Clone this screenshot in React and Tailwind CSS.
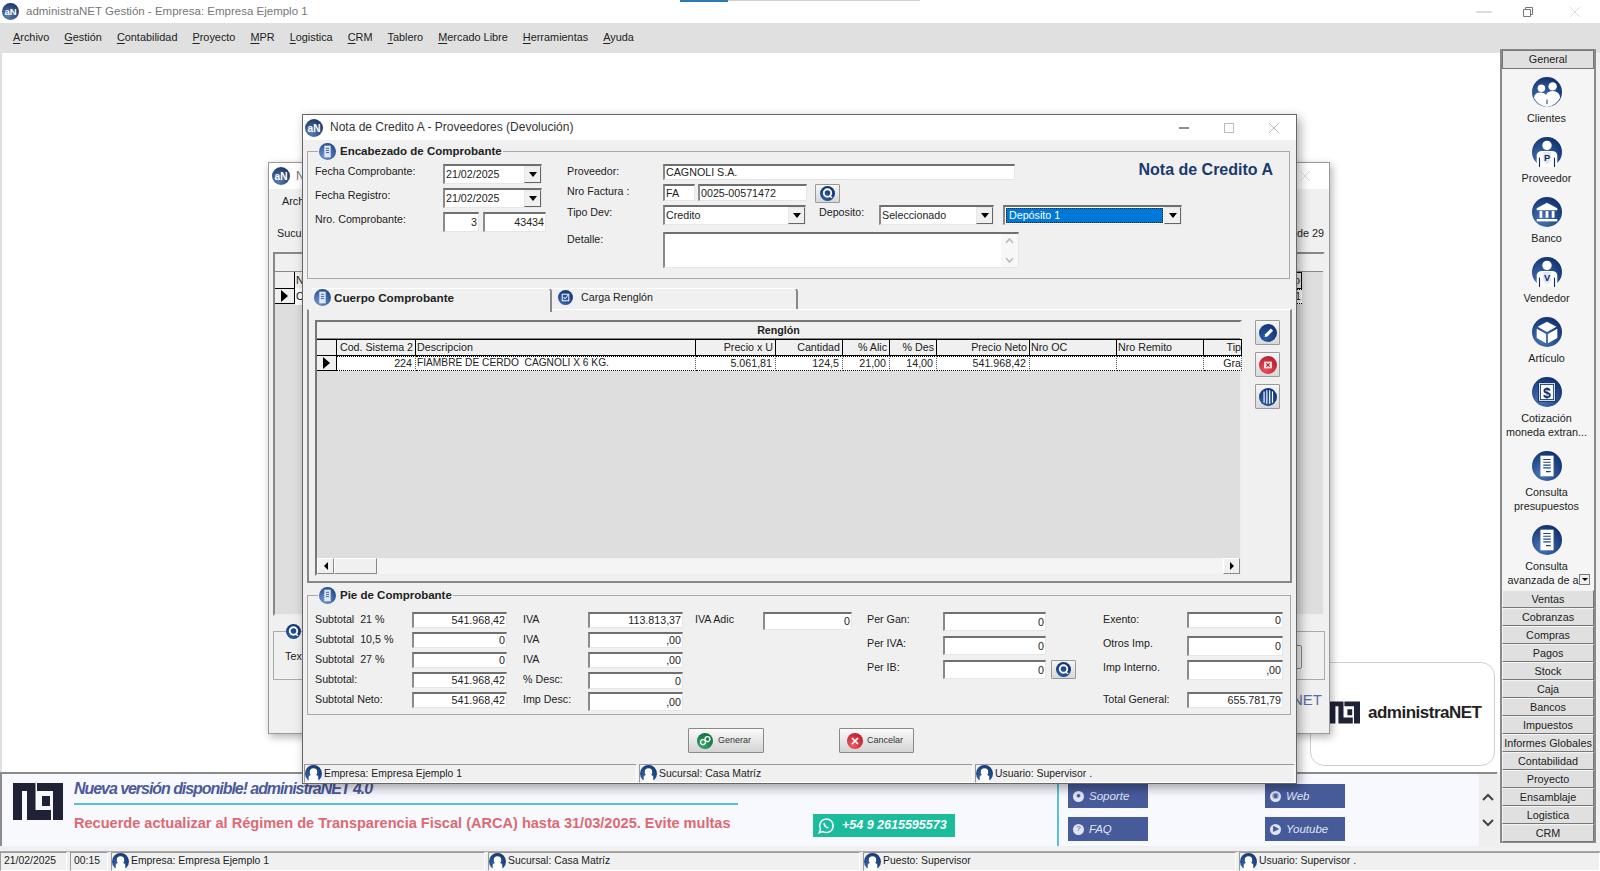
import React from 'react';

const Orb = ({ size = 30, from = '#4a78b8', to = '#0b2a68', children }) => (
    <svg width={size} height={size} viewBox="0 0 32 32" className="shrink-0">
        <defs>
            <radialGradient id={`orb${to.slice(1)}`} cx="0.35" cy="0.75" r="0.85">
                <stop offset="0" stopColor={from} />
                <stop offset="1" stopColor={to} />
            </radialGradient>
        </defs>
        <circle cx="16" cy="16" r="16" fill={`url(#orb${to.slice(1)})`} />
        {children}
    </svg>
);

const AppIcon = ({ size = 18 }) => (
    <Orb size={size} from="#5d7fb5" to="#14305f">
        <text x="16" y="23" textAnchor="middle" fontSize="18" fontWeight="700" fill="#fff">aN</text>
    </Orb>
);

const Person = ({ letter }) => (
    <>
        <circle cx="16" cy="9" r="5" fill="#fff" />
        <path d="M5 32 V20 Q5 15 11 15 H21 Q27 15 27 20 V32 Z" fill="#fff" />
        <path d="M8 32 V22 M24 32 V22" stroke="#0b2a68" strokeWidth="1.2" />
        <path d="M12 16 H20 V26 L16 29 L12 26 Z" fill="#dfe6f2" />
        <text x="16" y="26" textAnchor="middle" fontSize="10" fontWeight="700" fill="#0b2a68">{letter}</text>
    </>
);

const Clientes = () => (
    <Orb>
        <circle cx="10" cy="12" r="4" fill="#fff" />
        <circle cx="22" cy="10" r="4.5" fill="#fff" />
        <path d="M2 22 Q3 16 10 16.5 Q13 17 15 19 Q17 15 22 15 Q29 15 30 22 Q26 30 16 32 Q6 30 2 22 Z" fill="#fff" />
        <path d="M16 24 V29" stroke="#0b2a68" strokeWidth="1" />
    </Orb>
);

const Banco = () => (
    <Orb>
        <path d="M16 6 L27 12 V14 H5 V12 Z" fill="#fff" />
        <path d="M8 15 H11 V22 H8 Z M14.5 15 H17.5 V22 H14.5 Z M21 15 H24 V22 H21 Z" fill="#fff" />
        <path d="M5 23.5 H27 V26 H5 Z" fill="#fff" />
    </Orb>
);

const Cubo = () => (
    <Orb>
        <path d="M16 5 L26 10.5 L16 16 L6 10.5 Z" fill="#fff" />
        <path d="M5 12.5 L15 18 V28 L5 22.5 Z" fill="#fff" />
        <path d="M27 12.5 L17 18 V28 L27 22.5 Z" fill="#fff" />
    </Orb>
);

const Dolar = () => (
    <Orb>
        <rect x="7" y="6" width="18" height="20" fill="#e8eef8" stroke="#0b2a68" strokeWidth="1" />
        <rect x="9" y="8" width="14" height="16" fill="#fff" stroke="#1c4488" strokeWidth="1" />
        <text x="16" y="22" textAnchor="middle" fontSize="15" fontWeight="700" fill="#0b2a68">$</text>
    </Orb>
);

const Doc = () => (
    <Orb>
        <path d="M9 5 H23 V27 H9 Z" fill="#fff" />
        <path d="M12 9 H20 M12 12 H20 M12 15 H20 M12 18 H20 M15 22 H20" stroke="#1c4488" strokeWidth="1.2" />
    </Orb>
);

const Legend = () => (
    <Orb size={17} from="#6f97cc" to="#1c4488">
        <path d="M10 5 H22 V27 H10 Z" fill="#dfe8f5" />
        <path d="M13 10 H19 M13 14 H19 M13 18 H19" stroke="#1c4488" strokeWidth="1.5" />
    </Orb>
);

const Lupa = ({ size = 15 }) => (
    <Orb size={size} from="#2c5ca4" to="#0d2f70">
        <circle cx="16" cy="15" r="8" fill="none" stroke="#fff" strokeWidth="4" />
        <path d="M20 21 L26 25" stroke="#fff" strokeWidth="3" />
    </Orb>
);

const Staff = () => (
    <Orb size={17} from="#3a68ac" to="#123472">
        <circle cx="16" cy="13" r="7" fill="#fff" />
        <path d="M7 32 V24 Q7 19 12 19 H20 Q25 19 25 24 V32 Z" fill="#fff" />
    </Orb>
);

const Mark = ({ className }) => (
    <svg viewBox="0 0 50 37" className={className}>
        <path fill="#1f2235" d="M0 0 H22.5 V27 H38 V37 H14 V8 H9 V37 H0 Z M24 0 H50 V37 H40 V8 H24 Z M29 13 H37 V23 H29 Z" />
    </svg>
);

const sunken = 'border border-t-2 border-l-2 border-t-[#6f6f6f] border-l-[#8a8a8a] border-r-[#e6e6e6] border-b-[#e6e6e6] bg-white';

const Field = ({ className = '', right, children }) => (
    <div className={`${sunken} flex items-center overflow-hidden px-[1px] leading-none whitespace-nowrap ${right ? 'justify-end' : ''} ${className}`}>
        {children}
    </div>
);

const Combo = ({ className = '', value, selected }) => (
    <div className={`${sunken} flex items-stretch ${className}`}>
        <div className={`flex-1 flex items-center m-[1px] ${selected ? 'bg-[#0078d7] text-white border border-dotted border-[#222] px-[2px]' : ''}`}>{value}</div>
        <div className="w-[17px] bg-[#f0f0f0] border border-[#e8e8e8] border-r-[#666] border-b-[#666] flex items-center justify-center">
            <span className="w-0 h-0 border-x-[4px] border-x-transparent border-t-[5px] border-t-black" />
        </div>
    </div>
);

const Label = ({ className = '', children }) => <div className={`leading-[14px] whitespace-pre ${className}`}>{children}</div>;

const Group = ({ title, className = '', children }) => (
    <div className={`relative border border-[#a8a8a8] ${className}`}>
        <div className="absolute left-[10px] -top-[9px] flex items-center gap-[4px] bg-[#f0f0f0] pl-[1px] pr-[1px] h-[17px] font-bold text-[11.5px] text-[#222]">
            <Legend />
            <span>{title}</span>
        </div>
        {children}
    </div>
);

const gridCols = 'grid grid-cols-[20px_79px_280px_80px_67px_47px_47px_93px_87px_87px_38px] w-[925px] overflow-hidden';

const headers = [
    ['Cod. Sistema 2', 'text-right pr-[2px]'], ['Descripcion', 'pl-[1px]'], ['Precio x U', 'text-right pr-[2px]'], ['Cantidad', 'text-right pr-[2px]'],
    ['% Alic', 'text-right pr-[2px]'], ['% Des', 'text-right pr-[2px]'], ['Precio Neto', 'text-right pr-[2px]'], ['Nro OC', 'pl-[1px]'], ['Nro Remito', 'pl-[1px]'], ['Tip', 'text-right'],
];
const cells = [
    ['224', 'text-right pr-[3px]'], ['FIAMBRE DE CERDO  CAGNOLI X 6 KG.', 'whitespace-pre pl-[1px] text-[10.2px]'], ['5.061,81', 'text-right pr-[3px]'], ['124,5', 'text-right pr-[3px]'],
    ['21,00', 'text-right pr-[3px]'], ['14,00', 'text-right pr-[3px]'], ['541.968,42', 'text-right pr-[3px]'], ['', ''], ['', ''], ['Gra', 'text-right'],
];

const SideBtn = ({ children }) => (
    <button className="w-[25px] h-[25px] flex items-center justify-center border border-[#9a9a9a] rounded-[1px] bg-gradient-to-b from-[#f6f6f6] to-[#d8d8d8]">
        {children}
    </button>
);

const ActionBtn = ({ className = '', icon, children }) => (
    <button className={`h-[25px] flex items-center border border-[#8a8a8a] rounded-[1px] bg-gradient-to-b from-[#fafafa] to-[#d4d4d4] text-[9px] text-[#333] ${className}`}>
        {icon}{children}
    </button>
);

const menu = ['Archivo', 'Gestión', 'Contabilidad', 'Proyecto', 'MPR', 'Logistica', 'CRM', 'Tablero', 'Mercado Libre', 'Herramientas', 'Ayuda'];

const shortcuts = [
    { label: ['Clientes'], icon: <Clientes /> },
    { label: ['Proveedor'], icon: <Orb><Person letter="P" /></Orb> },
    { label: ['Banco'], icon: <Banco /> },
    { label: ['Vendedor'], icon: <Orb><Person letter="V" /></Orb> },
    { label: ['Artículo'], icon: <Cubo /> },
    { label: ['Cotización', 'moneda extran...'], icon: <Dolar /> },
    { label: ['Consulta', 'presupuestos'], icon: <Doc /> },
    { label: ['Consulta', 'avanzada de a'], icon: <Doc /> },
];

const sections = ['Ventas', 'Cobranzas', 'Compras', 'Pagos', 'Stock', 'Caja', 'Bancos', 'Impuestos', 'Informes Globales', 'Contabilidad', 'Proyecto', 'Ensamblaje', 'Logistica', 'CRM'];

const sectionBtn = 'h-[18px] flex items-center justify-center bg-[#e0e0e0] border border-[#f4f4f4] border-r-[#777] border-b-[#777] text-[10.8px] text-[#222] whitespace-nowrap';

const Sidebar = () => (
    <aside className="w-[96px] shrink-0 -mt-[4px] mb-[8px] mr-[4px] relative z-10 flex flex-col border border-[#8a8a8a] border-l-2 border-r-2 bg-[#f5f5f5]">
        <div className="h-[19px] flex items-center justify-center bg-[#e0e0e0] border border-[#777] text-[10.8px] text-[#222]">General</div>
        <div className="flex-1 flex flex-col items-center pt-[8px] pr-[3px] overflow-hidden text-[10.8px] text-[#222]">
            {shortcuts.map((s, i) => (
                <div key={i} className={`flex flex-col items-center shrink-0 relative w-full ${s.label.length > 1 ? 'h-[74px]' : 'h-[60px]'}`}>
                    {s.icon}
                    <div className="mt-[4px] text-center leading-[14px] whitespace-nowrap">
                        {s.label.map((l) => <div key={l} className={l === 'avanzada de a' ? 'pr-[7px]' : ''}>{l}</div>)}
                    </div>
                    {i === 7 && (
                        <span className="absolute right-[1px] top-[49px] w-[11px] h-[11px] bg-[#eee] border border-[#777] flex items-center justify-center">
                            <span className="w-0 h-0 border-x-[3px] border-x-transparent border-t-[3px] border-t-black" />
                        </span>
                    )}
                </div>
            ))}
        </div>
        {sections.map((s) => <div key={s} className={sectionBtn}>{s}</div>)}
    </aside>
);

const BlueLink = ({ icon, children }) => (
    <div className="w-[80px] h-[24px] bg-[#475a9a] flex items-center gap-[5px] pl-[5px] text-[#dfe4f2] italic text-[11.5px]">
        <span className="w-[11px] h-[11px] rounded-full bg-[#dfe4f2] flex items-center justify-center text-[8px] not-italic text-[#475a9a] leading-none">{icon}</span>
        <span className="pt-[1px]">{children}</span>
    </div>
);

const BottomPanel = () => (
    <div className="h-[74px] shrink-0 flex bg-[#f8f8ff] border-t-2 border-l-2 border-[#8c8c8c] mb-[5px] mr-[3px]">
        <div className="w-[66px] flex items-start justify-center pt-[9px] pl-[6px]">
            <Mark className="w-[50px] h-[37px]" />
        </div>
        <div className="w-[664px] ml-[6px] pt-[5px] shrink-0">
            <div className="font-bold italic text-[16px] leading-[20px] tracking-[-1.05px] text-[#4a5a9a] whitespace-nowrap">Nueva versión disponible! administraNET 4.0</div>
            <div className="h-[2px] mt-[4px] bg-[#5bc0de]" />
            <div className="font-bold text-[14.55px] leading-[18px] mt-[9px] text-[#dc6a72] whitespace-nowrap">Recuerde actualizar al Régimen de Transparencia Fiscal (ARCA) hasta 31/03/2025. Evite multas</div>
        </div>
        <div className="w-[319px] shrink-0 flex items-end justify-start pl-[75px] pb-[9px]">
            <div className="w-[142px] h-[23px] bg-[#1abc9c] flex items-center gap-[7px] pl-[4px] text-white italic font-bold text-[12.5px] whitespace-nowrap">
                <svg width="18" height="18" viewBox="0 0 24 24" fill="none" stroke="#fff" strokeWidth="2">
                    <path d="M3 21 L4.6 16 A9 9 0 1 1 8 19.5 Z" />
                    <path d="M8.5 8 Q8 13 14 15.5 L16 14 L14.5 12.5 L13.5 13 Q11.5 12 11 10.5 L11.5 9.5 L10 7.5 Z" fill="#fff" stroke="none" />
                </svg>
                +54 9 2615595573
            </div>
        </div>
        <div className="w-[2px] shrink-0 bg-[#5bc0de]" />
        <div className="flex-1 pl-[9px] pt-[10px] grid grid-cols-[197px_80px] grid-rows-[24px_24px] gap-y-[9px]">
            <BlueLink icon="●">Soporte</BlueLink>
            <BlueLink icon="◉">Web</BlueLink>
            <BlueLink icon="?">FAQ</BlueLink>
            <BlueLink icon="▶">Youtube</BlueLink>
        </div>
        <div className="w-[18px] shrink-0 bg-[#eeeeee] flex flex-col items-center justify-center gap-[16px]">
            <svg width="14" height="10" viewBox="0 0 14 10" fill="none" stroke="#444" strokeWidth="2"><path d="M2 8 L7 3 L12 8" /></svg>
            <svg width="14" height="10" viewBox="0 0 14 10" fill="none" stroke="#444" strokeWidth="2"><path d="M2 2 L7 7 L12 2" /></svg>
        </div>
    </div>
);

const statusCell = 'h-full flex items-center border border-t-[#9a9a9a] border-l-[#9a9a9a] border-r-[#fff] border-b-[#fff] whitespace-nowrap text-[10.4px] text-[#222]';

const StatusBar = () => (
    <div className="h-[20px] shrink-0 flex gap-[3px] bg-[#f0f0f0] border-t border-[#aaa]">
        <div className={`${statusCell} w-[67px] pl-[3px] pb-[1px]`}>21/02/2025</div>
        <div className={`${statusCell} w-[38px] pl-[3px] pb-[1px]`}>00:15</div>
        <div className={`${statusCell} w-[374px] gap-[2px]`}><Staff /><span className="pb-[2px]">Empresa: Empresa Ejemplo 1</span></div>
        <div className={`${statusCell} w-[372px] gap-[2px]`}><Staff /><span className="pb-[2px]">Sucursal: Casa Matríz</span></div>
        <div className={`${statusCell} w-[373px] gap-[2px]`}><Staff /><span className="pb-[2px]">Puesto: Supervisor</span></div>
        <div className={`${statusCell} flex-1 gap-[2px]`}><Staff /><span className="pb-[2px]">Usuario: Supervisor .</span></div>
    </div>
);

const BackWindow = () => (
    <div className="absolute left-[268px] top-[162px] w-[1062px] h-[572px] z-20 flex flex-col bg-[#f0f0f0] border border-[#999] shadow-[2px_3px_8px_rgba(0,0,0,0.3)] text-[10.8px] text-[#222]">
        <div className="h-[26px] shrink-0 bg-white flex items-center pl-[3px] gap-[6px]">
            <AppIcon />
            <span className="text-[12px] text-[#777]">N</span>
            <svg width="12" height="12" viewBox="0 0 12 12" className="ml-auto mr-[18px]" stroke="#ddd" fill="none"><path d="M1 1 L11 11 M11 1 L1 11" /></svg>
        </div>
        <div className="pl-[13px] pt-[5px] leading-[14px]">Arch</div>
        <div className="flex justify-between pl-[8px] pr-[5px] pt-[18px] leading-[14px]"><span>Sucu</span><span>de 29</span></div>
        <div className="mx-[4px] mt-[12px] h-[364px] shrink-0 border-2 border-[#888] border-r-[#eee] border-b-[#eee] bg-[#dedede]">
            <div className="h-[18px] bg-[#f0f0f0] border-b border-[#888]" />
            <div className="flex justify-between pr-[21px]">
                <div>
                    <div className="flex h-[17px]"><span className="w-[20px] bg-[#f0f0f0] border-r border-b border-black" /><span className="pl-[1px] bg-[#f0f0f0] border-b border-black pr-[30px]">N</span></div>
                    <div className="flex h-[15px] items-center">
                        <span className="w-[20px] h-full bg-[#f0f0f0] border-r border-b border-black flex items-center justify-center"><span className="w-0 h-0 border-y-[6px] border-y-transparent border-l-[7px] border-l-black" /></span>
                        <span className="pl-[1px] bg-white pr-[30px]">C</span>
                    </div>
                </div>
                <div>
                    <div className="h-[17px] bg-[#f0f0f0] border border-black pl-[12px] pr-[1px] leading-[14px] text-right">o</div>
                    <div className="h-[15px] bg-white border-y border-dotted border-black pl-[12px] pr-[1px] leading-[12px] text-right">1</div>
                </div>
            </div>
        </div>
        <div className="relative mx-[4px] mt-[15px] h-[49px] border border-[#aaa]">
            <div className="absolute left-[12px] -top-[8px] bg-[#f0f0f0]"><Lupa /></div>
            <div className="absolute left-[11px] top-[17px] leading-[14px]">Tex</div>
            <div className="absolute right-[22px] top-[13px] w-[30px] h-[24px] border border-[#888] rounded-[2px]" />
        </div>
        <div className="mt-[9px] flex justify-end pr-[7px] text-[15px] text-[#5a6fa8]">NET</div>
    </div>
);

const SearchBtn = ({ className = '' }) => (
    <button className={`w-[25px] h-[19px] flex items-center justify-center border border-[#9a9a9a] rounded-[1px] bg-gradient-to-b from-[#f6f6f6] to-[#d8d8d8] ${className}`}>
        <Lupa />
    </button>
);

const Dialog = () => (
    <div className="absolute left-[302px] top-[114px] w-[995px] h-[670px] z-30 flex flex-col bg-[#f0f0f0] border border-[#666] shadow-[3px_4px_10px_rgba(0,0,0,0.35)] text-[10.7px] text-[#222]">
        <div className="h-[25px] shrink-0 bg-white flex items-center pl-[2px]">
            <AppIcon />
            <span className="ml-[7px] pb-[2px] text-[12px] text-[#333]">Nota de Credito A - Proveedores (Devolución)</span>
            <div className="ml-auto flex items-center gap-[35px] pr-[17px]">
                <svg width="10" height="10" viewBox="0 0 10 10" stroke="#222" fill="none"><path d="M0 5 H10" /></svg>
                <svg width="10" height="10" viewBox="0 0 10 10" stroke="#bbb" fill="none"><rect x="0.5" y="0.5" width="9" height="9" /></svg>
                <svg width="10" height="10" viewBox="0 0 10 10" stroke="#bbb" fill="none"><path d="M0 0 L10 10 M10 0 L0 10" /></svg>
            </div>
        </div>

        <div className="mx-[4px] mt-[11px] flex flex-col">
            <Group title="Encabezado de Comprobante" className="h-[128px] w-[983px]">
                <div className="flex pt-[12px] pl-[7px] pr-[16px]">
                    <div className="grid grid-cols-[128px_auto] auto-rows-[20px] gap-y-[4px] w-[252px] shrink-0">
                        <Label>Fecha Comprobante:</Label>
                        <Combo className="w-[99px] h-[20px]" value="21/02/2025" />
                        <Label>Fecha Registro:</Label>
                        <Combo className="w-[99px] h-[20px]" value="21/02/2025" />
                        <Label>Nro. Comprobante:</Label>
                        <div className="flex gap-[4px]">
                            <Field right className="w-[36px] h-[20px]">3</Field>
                            <Field right className="w-[63px] h-[20px]">43434</Field>
                        </div>
                    </div>
                    <div className="flex-1 flex flex-col gap-[4px]">
                        <div className="flex h-[16px]">
                            <Label className="w-[96px]">Proveedor:</Label>
                            <Field className="w-[352px] h-[16px]">CAGNOLI S.A.</Field>
                            <div className="ml-auto font-bold text-[16px] leading-[16px] -mt-[2px] text-[#1a3a6e] whitespace-nowrap">Nota de Credito A</div>
                        </div>
                        <div className="flex h-[17px]">
                            <Label className="w-[96px]">Nro Factura :</Label>
                            <Field className="w-[32px] h-[17px]">FA</Field>
                            <Field className="w-[109px] h-[17px] ml-[3px]">0025-00571472</Field>
                            <SearchBtn className="ml-[8px]" />
                        </div>
                        <div className="flex h-[20px]">
                            <Label className="w-[96px]">Tipo Dev:</Label>
                            <Combo className="w-[143px] h-[20px]" value="Credito" />
                            <Label className="ml-[13px] w-[60px]">Deposito:</Label>
                            <Combo className="w-[115px] h-[20px]" value="Seleccionado" />
                            <Combo className="w-[179px] h-[20px] ml-[9px]" value="Depósito 1" selected />
                        </div>
                        <div className="flex h-[36px] mt-[3px]">
                            <Label className="w-[96px]">Detalle:</Label>
                            <div className={`${sunken} w-[356px] h-[36px] flex justify-end`}>
                                <div className="w-[17px] bg-[#f7f7f7] flex flex-col items-center justify-between py-[3px]">
                                    <svg width="9" height="7" viewBox="0 0 9 7" stroke="#bbb" fill="none" strokeWidth="1.5"><path d="M1 6 L4.5 2 L8 6" /></svg>
                                    <svg width="9" height="7" viewBox="0 0 9 7" stroke="#bbb" fill="none" strokeWidth="1.5"><path d="M1 1 L4.5 5 L8 1" /></svg>
                                </div>
                            </div>
                        </div>
                    </div>
                </div>
            </Group>

            <div className="flex ml-[5px] mt-[9px] h-[24px] relative z-10">
                <div className="w-[240px] h-[24px] pb-[6px] bg-[#f0f0f0] border-t border-[#fff] border-r-2 border-r-[#888] rounded-tr-[4px] flex items-center pl-[2px] gap-[3px] font-bold text-[11.7px]">
                    <Legend />
                    Cuerpo Comprobante
                </div>
                <div className="w-[246px] h-[21px] pb-[4px] bg-[#f0f0f0] border-t border-[#fff] border-r-2 border-r-[#888] rounded-tr-[4px] flex items-center pl-[6px] gap-[8px] text-[10.7px]">
                    <Orb size={15} from="#3a68ac" to="#123472"><rect x="9" y="9" width="14" height="14" fill="none" stroke="#fff" strokeWidth="2" /><path d="M12 15 L15 19 L22 10" fill="none" stroke="#fff" strokeWidth="2" /></Orb>
                    Carga Renglón
                </div>
            </div>

            <div className="-mt-[3px] w-[985px] h-[274px] flex border border-t-[#fff] border-l-2 border-l-[#888] border-r-2 border-r-[#888] border-b-2 border-b-[#888] pt-[10px] pl-[6px] pb-[5px]">
                <div className="w-[927px] flex flex-col border-2 border-t-[#777] border-l-[#777] border-r-[#eee] border-b-[#eee]">
                    <div className="h-[17px] shrink-0 flex items-center justify-center font-bold bg-[#f0f0f0] border-b border-[#888]">Renglón</div>
                    <div className={`${gridCols} h-[17px] shrink-0 bg-[#f0f0f0] border-y border-black`}>
                        <div className="border-r border-black" />
                        {headers.map(([h, cls]) => (
                            <div key={h} className={`border-r border-black leading-[14px] whitespace-nowrap ${cls}`}>{h}</div>
                        ))}
                    </div>
                    <div className={`${gridCols} h-[15px] shrink-0`}>
                        <div className="bg-[#f0f0f0] border-r border-b border-black flex items-center justify-center">
                            <span className="w-0 h-0 border-y-[6px] border-y-transparent border-l-[7px] border-l-black" />
                        </div>
                        {cells.map(([c, cls], i) => (
                            <div key={i} className={`bg-white border-y border-r border-dotted border-black border-r-[#555] leading-[12px] whitespace-nowrap overflow-hidden ${cls}`}>{c}</div>
                        ))}
                    </div>
                    <div className="flex-1 bg-[#dedede]" />
                    <div className="h-[16px] shrink-0 flex bg-[#f4f4f4]">
                        <div className="w-[17px] bg-[#f0f0f0] border border-[#888] border-t-white border-l-white flex items-center justify-center">
                            <span className="w-0 h-0 border-y-[4px] border-y-transparent border-r-[4px] border-r-black" />
                        </div>
                        <div className="w-[43px] bg-[#f0f0f0] border border-[#888] border-t-white border-l-white" />
                        <div className="flex-1" />
                        <div className="w-[17px] bg-[#f0f0f0] border border-[#888] border-t-white border-l-white flex items-center justify-center">
                            <span className="w-0 h-0 border-y-[4px] border-y-transparent border-l-[4px] border-l-black" />
                        </div>
                    </div>
                </div>
                <div className="ml-[13px] flex flex-col gap-[7px]">
                    <SideBtn>
                        <Orb size={18} from="#2c5ca4" to="#0d2f70"><path d="M10 23 L11 18 L21 8 L25 12 L15 22 Z" fill="#fff" /></Orb>
                    </SideBtn>
                    <SideBtn>
                        <Orb size={18} from="#e8505a" to="#b01c2c"><rect x="9" y="10" width="14" height="12" fill="#f8dfe0" /><path d="M13 13 L19 19 M19 13 L13 19" stroke="#b01c2c" strokeWidth="2" /></Orb>
                    </SideBtn>
                    <SideBtn>
                        <Orb size={18} from="#2c5ca4" to="#0d2f70"><path d="M9 6 V26 M14 4 V28 M19 4 V28 M24 6 V26" stroke="#fff" strokeWidth="2" /></Orb>
                    </SideBtn>
                </div>
            </div>

            <Group title="Pie de Comprobante" className="mt-[12px] h-[120px] w-[984px]">
                <div className="flex pt-[16px] pl-[7px]">
                    <div className="grid grid-cols-[97px_95px] auto-rows-[16px] gap-y-[4px] w-[208px] shrink-0">
                        <Label>{'Subtotal  21 %'}</Label><Field right className="h-[16px]">541.968,42</Field>
                        <Label>{'Subtotal  10,5 %'}</Label><Field right className="h-[16px]">0</Field>
                        <Label>{'Subtotal  27 %'}</Label><Field right className="h-[16px]">0</Field>
                        <Label>Subtotal:</Label><Field right className="h-[16px]">541.968,42</Field>
                        <Label>Subtotal Neto:</Label><Field right className="h-[16px]">541.968,42</Field>
                    </div>
                    <div className="grid grid-cols-[65px_95px] auto-rows-[16px] gap-y-[4px] w-[172px] shrink-0">
                        <Label>IVA</Label><Field right className="h-[16px]">113.813,37</Field>
                        <Label>IVA</Label><Field right className="h-[16px]">,00</Field>
                        <Label>IVA</Label><Field right className="h-[16px]">,00</Field>
                        <Label>% Desc:</Label><Field right className="h-[17px]">0</Field>
                        <Label>Imp Desc:</Label><Field right className="h-[19px]">,00</Field>
                    </div>
                    <div className="flex w-[172px] shrink-0">
                        <Label className="w-[68px]">IVA Adic</Label>
                        <Field right className="w-[89px] h-[18px]">0</Field>
                    </div>
                    <div className="grid grid-cols-[76px_103px_auto] auto-rows-[19px] gap-y-[5px] w-[236px] shrink-0">
                        <Label>Per Gan:</Label><Field right className="h-[19px]">0</Field><div />
                        <Label>Per IVA:</Label><Field right className="h-[19px]">0</Field><div />
                        <Label>Per IB:</Label><Field right className="h-[19px]">0</Field>
                        <SearchBtn className="ml-[5px]" />
                    </div>
                    <div className="flex flex-col w-[180px] shrink-0">
                        <div className="flex h-[16px] mb-[8px]"><Label className="w-[84px]">Exento:</Label><Field right className="w-[96px] h-[16px]">0</Field></div>
                        <div className="flex h-[20px] mb-[4px]"><Label className="w-[84px]">Otros Imp.</Label><Field right className="w-[96px] h-[20px]">0</Field></div>
                        <div className="flex h-[20px] mb-[12px]"><Label className="w-[84px]">Imp Interno.</Label><Field right className="w-[96px] h-[20px]">,00</Field></div>
                        <div className="flex h-[16px]"><Label className="w-[84px]">Total General:</Label><Field right className="w-[96px] h-[16px]">655.781,79</Field></div>
                    </div>
                </div>
            </Group>

            <div className="flex mt-[13px] pl-[381px] gap-[75px]">
                <ActionBtn className="w-[76px] pl-[8px] gap-[5px]" icon={
                    <Orb size={16} from="#3aa76a" to="#0f6b3a"><circle cx="12" cy="18" r="5" fill="none" stroke="#fff" strokeWidth="2.5" /><circle cx="21" cy="12" r="5" fill="none" stroke="#fff" strokeWidth="2.5" /></Orb>
                }>Generar</ActionBtn>
                <ActionBtn className="w-[75px] pl-[7px] gap-[4px]" icon={
                    <Orb size={16} from="#ee5a62" to="#b81c2c"><path d="M10 10 L22 22 M22 10 L10 22" stroke="#fff" strokeWidth="3.5" /></Orb>
                }>Cancelar</ActionBtn>
            </div>
        </div>

        <div className="mt-auto h-[19px] shrink-0 flex gap-[2px] px-[1px]">
            <div className={`${statusCell} w-[333px] gap-[2px]`}><Staff />Empresa: Empresa Ejemplo 1</div>
            <div className={`${statusCell} w-[334px] gap-[2px]`}><Staff />Sucursal: Casa Matríz</div>
            <div className={`${statusCell} flex-1 gap-[2px]`}><Staff />Usuario: Supervisor .</div>
        </div>
    </div>
);

export default function App() {
    return (
        <div className="relative w-[1600px] h-[871px] overflow-hidden flex flex-col bg-[#f0f0f0] font-['Liberation_Sans',Arial,sans-serif]">
            <div className="h-[23px] shrink-0 bg-white flex items-center relative">
                <div className="pl-[2px]"><AppIcon size={17} /></div>
                <span className="ml-[7px] text-[11.5px] text-[#777]">administraNET Gestión - Empresa: Empresa Ejemplo 1</span>
                <div className="absolute left-[680px] top-0 h-[2px] w-[48px] bg-[#2a7ab8]" />
                <div className="absolute left-[728px] top-0 h-[1px] w-[192px] bg-[#cfcfcf]" />
                <div className="ml-auto flex items-center pr-[20px]">
                    <svg width="16" height="10" viewBox="0 0 16 10" stroke="#bbb" fill="none"><path d="M0 5 H16" /></svg>
                    <svg width="10" height="10" viewBox="0 0 10 10" stroke="#777" fill="none" className="ml-[31px]"><path d="M0.5 2.5 H7.5 V9.5 H0.5 Z M2.5 2.5 V0.5 H9.5 V7.5 H7.5" /></svg>
                    <svg width="10" height="10" viewBox="0 0 10 10" stroke="#ddd" fill="none" className="ml-[37px]"><path d="M0 0 L10 10 M10 0 L0 10" /></svg>
                </div>
            </div>
            <div className="h-[30px] shrink-0 bg-[#e0e0e0] flex items-center pl-[13px] pb-[2px] gap-[15px] text-[10.9px] text-[#222]">
                {menu.map((m) => <span key={m}><span className="underline underline-offset-2">{m.charAt(0)}</span>{m.slice(1)}</span>)}
            </div>
            <div className="flex-1 flex min-h-0">
                <div className="flex-1 flex flex-col min-w-0">
                    <div className="flex-1 bg-white border-l-2 border-[#e0e0e0] flex items-end justify-end pr-[5px] pb-[6px]">
                        <div className="w-[185px] h-[104px] border border-[#cfcfcf] rounded-[14px] flex items-center pl-[19px] pb-[3px] gap-[8px]">
                            <Mark className="w-[30px] h-[25px]" />
                            <span className="font-bold text-[17px] tracking-[-0.5px] text-[#222]">administraNET</span>
                        </div>
                    </div>
                    <BottomPanel />
                </div>
                <Sidebar />
            </div>
            <StatusBar />
            <BackWindow />
            <Dialog />
        </div>
    );
}
